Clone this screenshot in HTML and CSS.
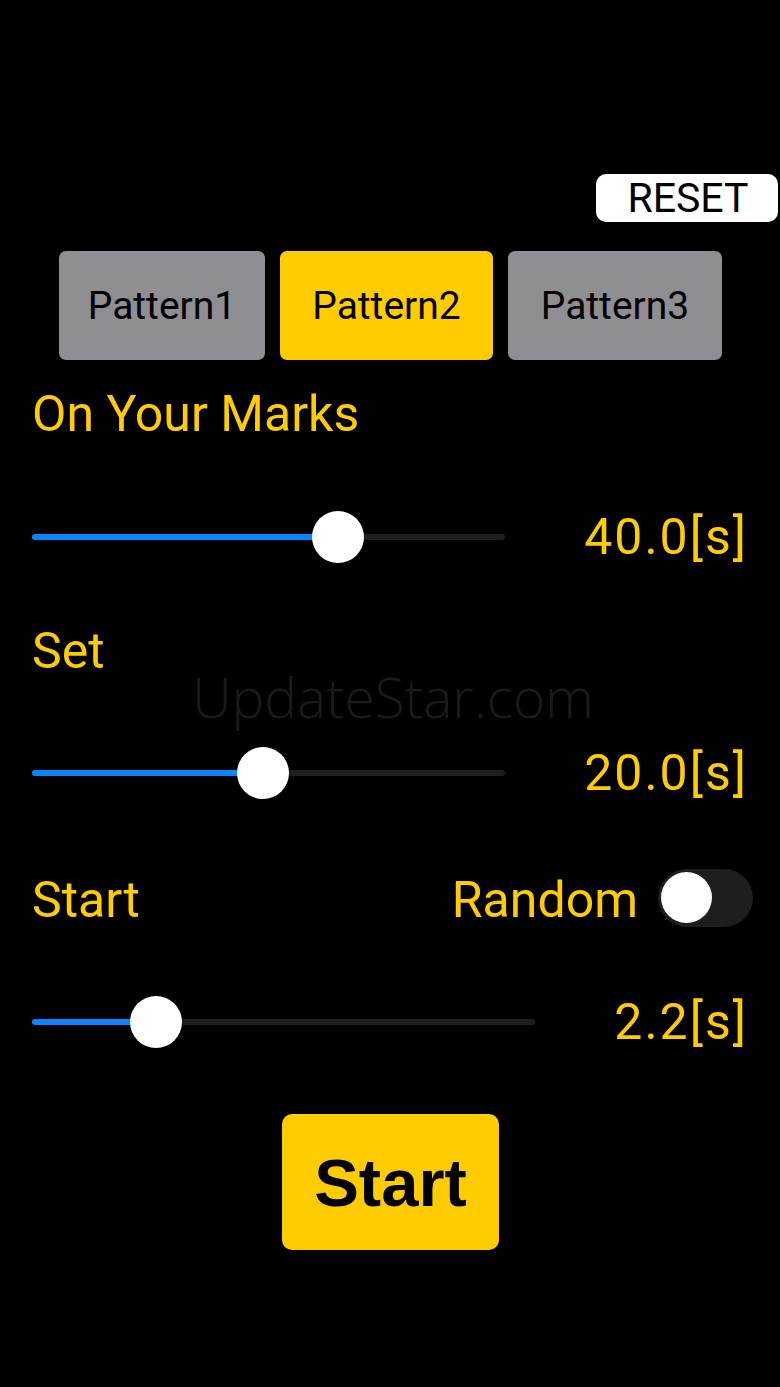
FILE: index.html
```html
<!DOCTYPE html>
<html lang="en">
<head>
    <meta charset="UTF-8">
    <meta name="viewport" content="width=device-width, initial-scale=1.0">
    <title>Start Timer</title>
    <link rel="stylesheet" href="styles.css">
</head>
<body>
    <div class="screen">
        <div class="reset-row">
            <button type="button" class="reset">RESET</button>
        </div>

        <div class="patterns">
            <button type="button" class="pattern p1">Pattern1</button>
            <button type="button" class="pattern p2 active">Pattern2</button>
            <button type="button" class="pattern p3">Pattern3</button>
        </div>

        <div class="label marks">On Your Marks</div>
        <div class="slider-row first">
            <div class="track">
                <div class="fill" style="width: 64.7%"></div>
                <div class="thumb" style="left: 64.7%"></div>
            </div>
            <div class="value">40.0[s]</div>
        </div>

        <div class="label set">Set</div>
        <div class="slider-row second">
            <div class="track">
                <div class="fill" style="width: 48.8%"></div>
                <div class="thumb" style="left: 48.8%"></div>
            </div>
            <div class="value">20.0[s]</div>
        </div>

        <div class="start-row">
            <div class="label">Start</div>
            <div class="random">
                <span class="label">Random</span>
                <div class="toggle"><div class="knob"></div></div>
            </div>
        </div>
        <div class="slider-row third">
            <div class="track">
                <div class="fill" style="width: 24.7%"></div>
                <div class="thumb" style="left: 24.7%"></div>
            </div>
            <div class="value">2.2[s]</div>
        </div>

        <div class="start-wrap">
            <button type="button" class="start">Start</button>
        </div>

        <!-- watermark from the original capture -->
        <div class="watermark">UpdateStar.com</div>
    </div>
</body>
</html>
```

FILE: styles.css
```css
body {
    margin: 0;
    padding: 0;
    background-color: #000;
    font-family: Roboto, "Liberation Sans", sans-serif;
}

.screen {
    position: relative;
    width: 780px;
    height: 1387px;
    overflow: hidden;
}

button {
    border: none;
    padding: 0;
    font-family: Roboto, "Liberation Sans", sans-serif;
    color: #000;
    cursor: pointer;
}

.reset-row {
    display: flex;
    justify-content: flex-end;
    padding-top: 174px;
    padding-right: 2px;
}

.reset {
    width: 182px;
    height: 48px;
    background-color: #fff;
    border-radius: 10px;
    font-size: 41px;
    line-height: 48px;
    padding-left: 2px;
}

.patterns {
    display: flex;
    justify-content: center;
    gap: 15px;
    margin-top: 29px;
    padding-left: 1px;
}

.pattern {
    height: 109px;
    border-radius: 7px;
    background-color: #8e8e93;
    font-size: 39px;
}

.p1 { width: 206px; }
.p2 { width: 213px; }
.p3 { width: 214px; }

.pattern.active {
    background-color: #ffcc00;
}

.label {
    color: #ffcc00;
    font-size: 50px;
    line-height: 60px;
}

.marks {
    margin-top: 24px;
    padding-left: 32px;
}

.set {
    margin-top: 54px;
    padding-left: 32px;
}

.slider-row {
    display: flex;
    align-items: center;
    gap: 79px;
    height: 60px;
    padding: 0 32px 0 32px;
}

.slider-row.first { margin-top: 63px; }
.slider-row.second { margin-top: 62px; }
.slider-row.third { margin-top: 62px; }

.track {
    position: relative;
    flex: 1;
    height: 6px;
    border-radius: 3px;
    background-color: #1e1e1e;
}

.fill {
    height: 100%;
    border-radius: 3px;
    background-color: #0a84ff;
}

.thumb {
    position: absolute;
    top: 50%;
    width: 52px;
    height: 52px;
    margin: -26px 0 0 -26px;
    border-radius: 50%;
    background-color: #fff;
}

.value {
    color: #ffcc00;
    font-size: 50px;
    letter-spacing: 2px;
    line-height: 60px;
}

.start-row {
    display: flex;
    justify-content: space-between;
    align-items: center;
    margin-top: 67px;
    padding: 0 27px 0 32px;
}

.random {
    display: flex;
    align-items: center;
    gap: 20px;
}

.toggle {
    width: 95px;
    height: 58px;
    margin-top: -5px;
    border-radius: 29px;
    background-color: #1e1e1e;
    display: flex;
    align-items: center;
    padding-left: 3px;
    box-sizing: border-box;
}

.knob {
    width: 51px;
    height: 51px;
    border-radius: 50%;
    background-color: #fff;
}

.start-wrap {
    display: flex;
    justify-content: center;
    margin-top: 62px;
    padding-left: 1px;
}

.start {
    width: 217px;
    height: 136px;
    border-radius: 10px;
    background-color: #ffcc00;
    font-family: "Liberation Sans", Arial, sans-serif;
    font-size: 67px;
    font-weight: bold;
}

.watermark {
    position: absolute;
    left: 192px;
    top: 659px;
    color: #1b1b1b;
    font-family: "Open Sans", sans-serif;
    font-size: 55px;
    font-weight: 300;
    pointer-events: none;
}
```
